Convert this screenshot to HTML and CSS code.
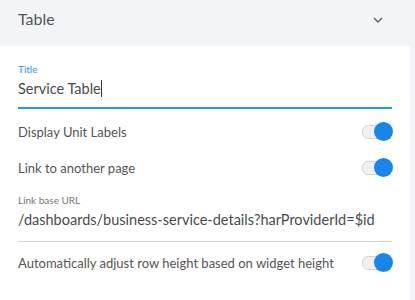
FILE: index.html
```html
<!DOCTYPE html>
<html lang="en">

<head>
    <meta charset="UTF-8">
    <meta name="viewport" content="width=device-width, initial-scale=1.0">
    <title>Table settings</title>
    <link rel="stylesheet" href="styles.css">
</head>

<body>
    <div class="panel">
        <div class="panel-header">
            <span class="panel-title">Table</span>
            <svg class="chevron" width="12" height="8" viewBox="0 0 12 8">
                <path d="M2 2 L6 6 L10 2" fill="none" stroke="#666" stroke-width="1.5" />
            </svg>
        </div>
        <div class="panel-body">
            <div class="field focused">
                <label class="field-label">Title</label>
                <div class="field-value">Service Table<span class="caret"></span></div>
            </div>
            <div class="toggle-row">
                <span>Display Unit Labels</span>
                <span class="toggle"><span class="knob"></span></span>
            </div>
            <div class="toggle-row">
                <span>Link to another page</span>
                <span class="toggle"><span class="knob"></span></span>
            </div>
            <div class="field">
                <label class="field-label">Link base URL</label>
                <div class="field-value">/dashboards/business-service-details?harProviderId=$id</div>
            </div>
            <div class="toggle-row">
                <span>Automatically adjust row height based on widget height</span>
                <span class="toggle"><span class="knob"></span></span>
            </div>
        </div>
    </div>
</body>

</html>
```

FILE: styles.css
```css
body {
    margin: 0;
    font-family: Lato, "Open Sans", sans-serif;
    background: #f3f4f8;
    color: #555;
}

.panel {
    width: 410px;
}

.panel-header {
    height: 46px;
    display: flex;
    align-items: center;
    justify-content: space-between;
    padding: 0 26px 0 18px;
    box-sizing: border-box;
    background: #f3f4f8;
}

.panel-title {
    font-size: 16px;
    color: #555;
    margin-top: -9px;
}

.chevron {
    margin-top: -7px;
}

.panel-body {
    background: #fff;
    padding: 17px 18px 20px 18px;
    height: 254px;
    box-sizing: border-box;
}

.field {
    border-bottom: 1px solid #d5d5d5;
}

.field.focused {
    border-bottom: 2px solid #2196f3;
}

.field.focused .field-value {
    padding-bottom: 8px;
}

.field-label {
    display: block;
    font-size: 10px;
    color: #777;
    line-height: 12px;
}

.focused .field-label {
    color: #2196f3;
}

.field-value {
    font-size: 14.5px;
    color: #4a4a4a;
    line-height: 20px;
    padding: 4px 0 11px;
    white-space: nowrap;
}

.caret {
    display: inline-block;
    width: 1px;
    height: 17px;
    background: #333;
    vertical-align: -3px;
}

.toggle-row {
    display: flex;
    align-items: center;
    justify-content: space-between;
    height: 36px;
    font-size: 13px;
    color: #555;
}

.field + .toggle-row {
    margin-top: 5px;
}

.toggle-row + .field {
    margin-top: 8px;
}

.field:not(.focused) + .toggle-row {
    margin-top: 3px;
}

.toggle {
    position: relative;
    width: 24px;
    height: 12px;
    border-radius: 6px;
    background: #f0f0f0;
    border: 1px solid #d4d4d4;
    margin-right: 4px;
}

.knob {
    position: absolute;
    right: -6px;
    top: -4px;
    width: 19px;
    height: 19px;
    border-radius: 50%;
    background: #1a85e8;
}
```
